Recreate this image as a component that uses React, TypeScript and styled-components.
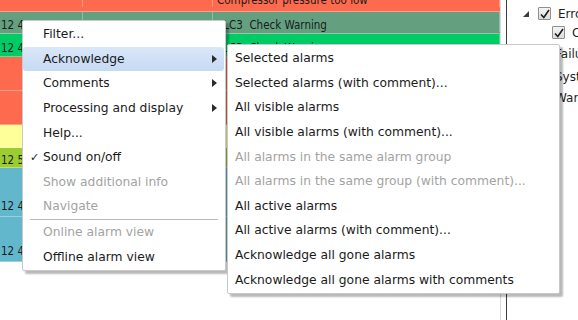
import styled, { createGlobalStyle } from "styled-components";

const GlobalStyle = createGlobalStyle`
  html, body {
    margin: 0;
    padding: 0;
    background: #ffffff;
    overflow: hidden;
  }
`;

const Page = styled.div`
  position: relative;
  width: 578px;
  height: 320px;
  display: flex;
  overflow: hidden;
  background: #fff;
`;

const AlarmTable = styled.div`
  width: 501px;
  flex-shrink: 0;
  display: flex;
  flex-direction: column;
  margin-top: -11px;
  border-right: 1px solid #d4dbe2;
  box-sizing: border-box;
  font-family: "DejaVu Sans Condensed", "DejaVu Sans", sans-serif;
  font-size: 11.5px;
  color: #1a1a1a;
`;

const Row = styled.div<{ $bg: string; $h: number; $pad?: number }>`
  height: ${(p) => p.$h}px;
  flex-shrink: 0;
  background: ${(p) => p.$bg};
  display: grid;
  grid-template-columns: 83px 130px 1fr;
  border-bottom: 1px solid rgba(255, 255, 255, 0.35);
  box-sizing: border-box;
  padding-bottom: ${(p) => p.$pad ?? 4}px;
`;

const Cell = styled.div`
  padding-left: 1px;
  white-space: pre;
  overflow: hidden;
  display: flex;
  align-items: flex-end;
  border-right: 1px solid rgba(255, 255, 255, 0.3);
  & + & {
    padding-left: 4px;
  }
`;

const Gap = styled.div`
  width: 5px;
  flex-shrink: 0;
`;

const Divider = styled.div`
  width: 1px;
  flex-shrink: 0;
  background: #3c3c3c;
`;

const TreePanel = styled.div`
  flex: 1;
  min-width: 0;
  display: flex;
  flex-direction: column;
  padding-top: 4px;
  font-family: "DejaVu Sans", sans-serif;
  font-size: 12px;
  color: #1e1e1e;
`;

const TreeRow = styled.div<{ $indent: number; $h: number }>`
  display: flex;
  align-items: center;
  gap: 7px;
  height: ${(p) => p.$h}px;
  padding-left: ${(p) => p.$indent}px;
  white-space: nowrap;
`;

const Expander = styled.span`
  width: 0;
  height: 0;
  border-left: 6px solid transparent;
  border-bottom: 6px solid #3a3a3a;
  margin-right: 2px;
`;

const CheckBox = styled.span`
  width: 11px;
  height: 11px;
  border: 1px solid #8e8f8f;
  border-radius: 1px;
  background: linear-gradient(#f4f4f4, #dcdcdc);
  display: flex;
  align-items: center;
  justify-content: center;
  flex-shrink: 0;
`;

const Menu = styled.div<{ $left: number; $top: number; $w: number }>`
  position: absolute;
  left: ${(p) => p.$left}px;
  top: ${(p) => p.$top}px;
  width: ${(p) => p.$w}px;
  box-sizing: border-box;
  padding: 1px 0;
  background: #ffffff;
  border: 1px solid #c9c9c9;
  border-radius: 2px;
  box-shadow: 3px 3px 2px rgba(0, 0, 0, 0.28);
  font-family: "DejaVu Sans", sans-serif;
  font-size: 12.3px;
  color: #1b1b1b;
`;

const Item = styled.div<{ $disabled?: boolean; $active?: boolean; $indent: number }>`
  position: relative;
  height: 24.6px;
  display: flex;
  align-items: center;
  padding-left: ${(p) => p.$indent}px;
  box-sizing: border-box;
  white-space: nowrap;
  color: ${(p) => (p.$disabled ? "#a3a3a3" : "#1b1b1b")};
  border-radius: 3px;
  margin: 0 1px 0 0;
  background: ${(p) =>
    p.$active ? "linear-gradient(#dae7f8, #c5daf4)" : "transparent"};
`;

const Check = styled.span`
  position: absolute;
  left: 7px;
  font-size: 11px;
`;

const Arrow = styled.span`
  position: absolute;
  right: 7px;
  width: 0;
  height: 0;
  border-top: 4px solid transparent;
  border-bottom: 4px solid transparent;
  border-left: 5px solid #2b2b2b;
`;

const Separator = styled.div`
  height: 1px;
  margin: 0 7px 0 7px;
  background: #b8b8b8;
`;

const rows = [
  { bg: "#fd6a4d", h: 23, t: "", msg: "Compressor pressure too low", pad: 4 },
  { bg: "#64a080", h: 22, t: "12 4", msg: "PLC3  Check Warning", pad: 1 },
  { bg: "#00cc66", h: 23, t: "12 4", msg: "PLC3  Check Warning", pad: 1 },
  { bg: "#fd6a4d", h: 34, t: "", msg: "" },
  { bg: "#fd6a4d", h: 34, t: "", msg: "" },
  { bg: "#ffff99", h: 23, t: "", msg: "" },
  { bg: "#9acd32", h: 20, t: "12 5", msg: "", pad: 0 },
  { bg: "#62b7cc", h: 49, t: "12 4", msg: "", pad: 3 },
  { bg: "#62b7cc", h: 45, t: "12 4", msg: "", pad: 3 },
];

const mainItems = [
  { label: "Filter..." },
  { label: "Acknowledge", sub: true, active: true },
  { label: "Comments", sub: true },
  { label: "Processing and display", sub: true },
  { label: "Help..." },
  { label: "Sound on/off", checked: true },
  { label: "Show additional info", disabled: true },
  { label: "Navigate", disabled: true },
];

const ackItems = [
  { label: "Selected alarms" },
  { label: "Selected alarms (with comment)..." },
  { label: "All visible alarms" },
  { label: "All visible alarms (with comment)..." },
  { label: "All alarms in the same alarm group", disabled: true },
  { label: "All alarms in the same group (with comment)...", disabled: true },
  { label: "All active alarms" },
  { label: "All active alarms (with comment)..." },
  { label: "Acknowledge all gone alarms" },
  { label: "Acknowledge all gone alarms with comments" },
];

function Tick() {
  return (
    <svg width="10" height="10" viewBox="0 0 10 10">
      <path d="M1 5.5 L3.8 8.5 L9 1" fill="none" stroke="#1d1d1d" strokeWidth="1.6" />
    </svg>
  );
}

function App() {
  return (
    <Page>
      <GlobalStyle />
      <AlarmTable>
        {rows.map((r, i) => (
          <Row key={i} $bg={r.bg} $h={r.h} $pad={r.pad}>
            <Cell>{r.t}</Cell>
            <Cell />
            <Cell>{r.msg}</Cell>
          </Row>
        ))}
      </AlarmTable>
      <Gap />
      <Divider />
      <TreePanel>
        <TreeRow $indent={16} $h={19}>
          <Expander />
          <CheckBox>
            <Tick />
          </CheckBox>
          Error
        </TreeRow>
        <TreeRow $indent={45} $h={19}>
          <CheckBox>
            <Tick />
          </CheckBox>
          Compressor
        </TreeRow>
        <TreeRow $indent={48} $h={24}>Failure</TreeRow>
        <TreeRow $indent={48} $h={21}>System</TreeRow>
        <TreeRow $indent={48} $h={22}>Warning</TreeRow>
      </TreePanel>

      <Menu $left={22} $top={20} $w={204}>
        {mainItems.map((m) => (
          <Item key={m.label} $indent={20} $active={m.active} $disabled={m.disabled}>
            {m.checked && <Check>✓</Check>}
            {m.label}
            {m.sub && <Arrow />}
          </Item>
        ))}
        <Separator />
        <Item $indent={20} $disabled>
          Online alarm view
        </Item>
        <Item $indent={20}>Offline alarm view</Item>
      </Menu>

      <Menu $left={227} $top={44} $w={333}>
        {ackItems.map((m) => (
          <Item key={m.label} $indent={7} $disabled={m.disabled}>
            {m.label}
          </Item>
        ))}
      </Menu>
    </Page>
  );
}

export default App;
